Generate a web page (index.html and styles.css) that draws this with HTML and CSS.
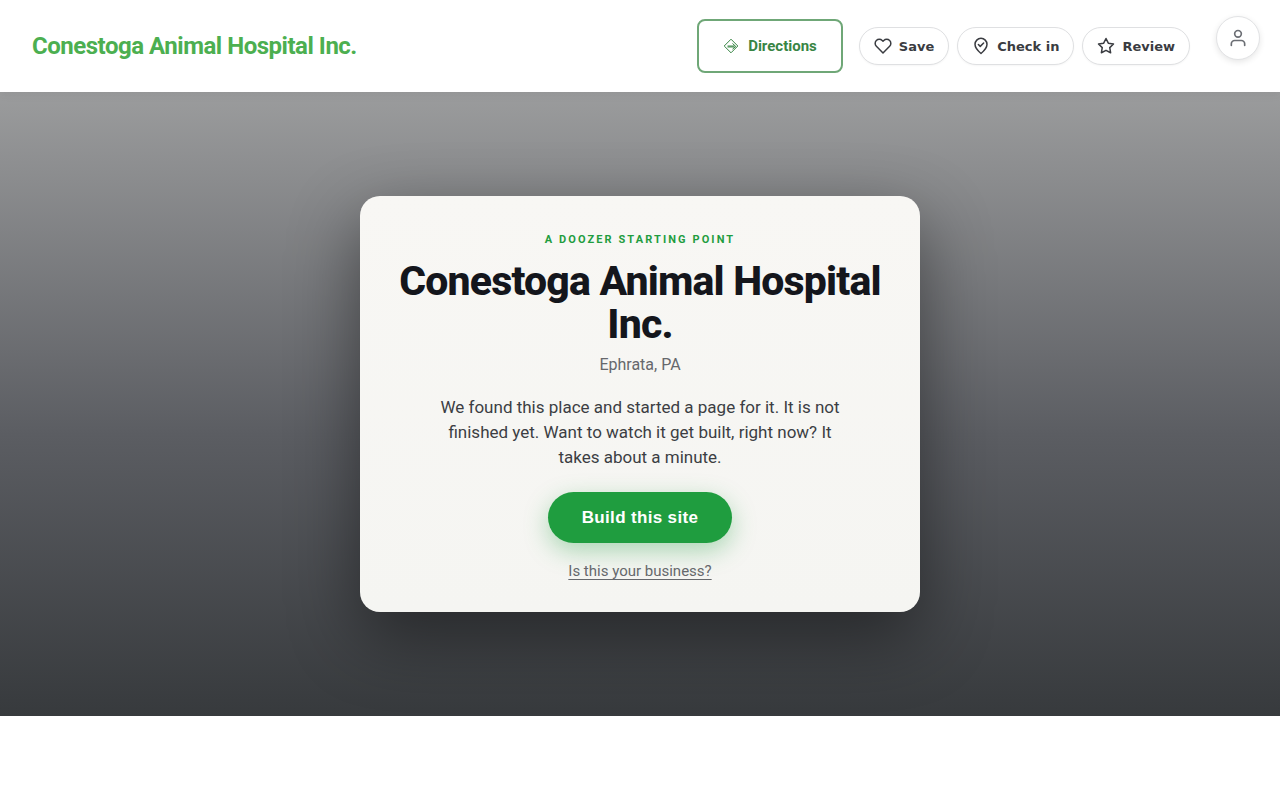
FILE: index.html
```html
<!DOCTYPE html>
<html lang="en">
<head>
    <meta charset="UTF-8">
    <meta name="viewport" content="width=device-width, initial-scale=1.0">
    <title>Conestoga Animal Hospital Inc.</title>
    <link rel="stylesheet" href="styles.css">
</head>
<body>
<header class="site-header">
    <a href="#" class="brand">Conestoga Animal Hospital Inc.</a>
    <div class="header-actions">
        <a href="#" class="directions">
            <svg width="16" height="16" viewBox="0 0 16 16" fill="none" stroke="currentColor" stroke-linejoin="round" aria-hidden="true">
                <path d="M8 1.200 14.800 8 8 14.800 1.200 8Z"/>
                <path d="M4.500 8.500h7" stroke-width="2.200" opacity="0.800"/>
                <path d="M9.500 5.500 12.800 8.500 9.500 11.200"/>
            </svg>
            Directions
        </a>
        <div class="pills">
            <button type="button" class="pill">
                <svg width="18" height="18" viewBox="0 0 24 24" aria-hidden="true"><path d="M20.84 4.61a5.5 5.5 0 0 0-7.78 0L12 5.67l-1.06-1.06a5.5 5.5 0 0 0-7.78 7.78L12 21.23l8.84-8.84a5.5 5.5 0 0 0 0-7.78z"/></svg>
                Save
            </button>
            <button type="button" class="pill">
                <svg width="18" height="18" viewBox="0 0 24 24" aria-hidden="true"><path d="M12 22s8-6.5 8-12.2a8 8 0 0 0-16 0C4 15.5 12 22 12 22z"/><path d="m8.5 10 2.5 2.5 4.5-4.5"/></svg>
                Check in
            </button>
            <button type="button" class="pill">
                <svg width="18" height="18" viewBox="0 0 24 24" aria-hidden="true"><path d="m12 2 3.09 6.26L22 9.27l-5 4.87 1.18 6.88L12 17.77l-6.18 3.25L7 14.14 2 9.27l6.91-1.01z"/></svg>
                Review
            </button>
        </div>
        <button type="button" class="account" aria-label="Account">
            <svg width="20" height="20" viewBox="0 0 24 24" aria-hidden="true"><path d="M20 21v-2a4 4 0 0 0-4-4H8a4 4 0 0 0-4 4v2"/><circle cx="12" cy="7" r="4"/></svg>
        </button>
    </div>
</header>

<main class="hero">
    <section class="card">
        <p class="eyebrow">A Doozer starting point</p>
        <h1>Conestoga Animal Hospital Inc.</h1>
        <p class="location">Ephrata, PA</p>
        <p class="intro">We found this place and started a page for it. It is not finished yet. Want to watch it get built, right now? It takes about a minute.</p>
        <button type="button" class="build-button">Build this site</button>
        <a href="#" class="claim">Is this your business?</a>
    </section>
</main>
</body>
</html>
```
FILE: styles.css
```css
* {
    box-sizing: border-box;
}
body {
    margin: 0;
    font-family: Roboto, "Liberation Sans", sans-serif;
    background: #fff;
    color: #14161c;
}

/* Header */
.site-header {
    position: relative;
    display: flex;
    align-items: center;
    justify-content: space-between;
    min-height: 92px;
    padding: 16px 20px 16px 32px;
    background: #fff;
    box-shadow: 0 2px 10px rgba(0, 0, 0, 0.06);
}
.brand {
    color: #4caf50;
    font-size: 24px;
    font-weight: 700;
    letter-spacing: -0.02em;
    text-decoration: none;
}
.header-actions {
    display: flex;
    align-items: center;
    align-self: stretch;
}
.directions {
    display: flex;
    align-items: center;
    gap: 9px;
    height: 54px;
    padding: 0 24px;
    border: 2px solid #6fa777;
    border-radius: 8px;
    color: #388544;
    font-size: 15px;
    font-weight: 700;
    line-height: 24px;
    text-decoration: none;
}
.pills {
    display: flex;
    gap: 8px;
    margin: 0 26px 0 16px;
}
.pill {
    display: flex;
    align-items: center;
    gap: 7px;
    height: 38px;
    padding: 0 14px;
    border: 1px solid #dfe0e2;
    border-radius: 19px;
    background: #fff;
    color: #3a3c41;
    font-family: "DejaVu Sans", sans-serif;
    font-size: 13px;
    font-weight: 700;
    box-shadow: 0 1px 2px rgba(0, 0, 0, 0.04);
    cursor: pointer;
}
.pill svg,
.account svg {
    fill: none;
    stroke: currentColor;
    stroke-width: 2;
    stroke-linecap: round;
    stroke-linejoin: round;
}
.account {
    display: flex;
    align-items: center;
    align-self: flex-start;
    justify-content: center;
    width: 44px;
    height: 44px;
    padding: 0;
    border: 1px solid #e2e3e5;
    border-radius: 50%;
    background: #fff;
    color: #6b6e74;
    box-shadow: 0 2px 6px rgba(0, 0, 0, 0.1);
    cursor: pointer;
}

/* Hero */
.hero {
    display: flex;
    align-items: center;
    justify-content: center;
    min-height: 78vh;
    padding: 48px 20px;
    background: linear-gradient(180deg, #9b9c9d 0%, #5b5d62 55%, #373a3d 100%);
    overflow: hidden;
}
.card {
    display: flex;
    flex-direction: column;
    align-items: center;
    width: 100%;
    max-width: 560px;
    padding: 36px 32px 31px;
    border-radius: 20px;
    background: linear-gradient(180deg, #f8f7f4, #f5f5f2);
    box-shadow: 0 24px 70px rgba(0, 0, 0, 0.45);
    text-align: center;
}
.card p,
.card h1 {
    margin: 0;
}
.card .eyebrow {
    margin-bottom: 12px;
    color: #1f9d3f;
    font-size: 11px;
    font-weight: 700;
    line-height: 16px;
    letter-spacing: 0.19em;
    text-transform: uppercase;
}
.card h1 {
    margin-bottom: 8px;
    font-size: 41px;
    font-weight: 800;
    line-height: 43px;
    letter-spacing: -0.02em;
}
.card .location {
    margin-bottom: 19px;
    color: #66686c;
    font-size: 16px;
    line-height: 22px;
}
.card .intro {
    max-width: 400px;
    margin-bottom: 22px;
    color: #3c3e43;
    font-size: 17px;
    line-height: 25px;
}
.build-button {
    height: 51px;
    margin-bottom: 18px;
    padding: 0 34px;
    border: 0;
    border-radius: 26px;
    background: #1f9d3f;
    color: #fff;
    font-family: "Liberation Sans", Arial, sans-serif;
    font-size: 17px;
    font-weight: 700;
    letter-spacing: 0.02em;
    box-shadow: 0 8px 24px rgba(31, 157, 63, 0.35);
    cursor: pointer;
}
.claim {
    color: #66686c;
    font-size: 15px;
    line-height: 20px;
    text-decoration: underline;
    text-underline-offset: 3px;
}
```
